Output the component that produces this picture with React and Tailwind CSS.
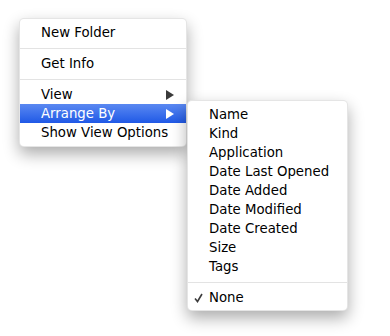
const font = { fontFamily: '"DejaVu Sans", "Liberation Sans", sans-serif' };

function Arrow({ active }) {
  return (
    <svg width="8" height="10" viewBox="0 0 8 10" className="shrink-0">
      <path d="M0 0 L8 5 L0 10 Z" fill={active ? "#ffffff" : "#3a3a3a"} />
    </svg>
  );
}

function Item({ label, arrow, active, check }) {
  return (
    <div
      className={`h-[19px] flex items-center pl-[21px] pr-[12px] relative ${
        active ? "bg-gradient-to-b from-[#5a88f1] to-[#1f58e6] text-white" : "text-black"
      }`}
    >
      {check && (
        <svg width="9" height="10" viewBox="0 0 9 10" className="absolute left-[6px] top-[5px]">
          <path d="M1 5.5 L3.5 8.5 L8 1" fill="none" stroke="#3c3c3c" strokeWidth="1.6" />
        </svg>
      )}
      <span className="flex-1 leading-none">{label}</span>
      {arrow && <Arrow active={active} />}
    </div>
  );
}

function Sep() {
  return (
    <div className="h-[12px] flex items-center">
      <div className="h-px w-full bg-[#e3e3e3]" />
    </div>
  );
}

export default function App() {
  const sortKeys = [
    "Name",
    "Kind",
    "Application",
    "Date Last Opened",
    "Date Added",
    "Date Modified",
    "Date Created",
    "Size",
    "Tags",
  ];

  return (
    <div className="w-[390px] h-[336px] bg-white relative overflow-hidden text-[13.3px]" style={font}>
      {/* main context menu */}
      <div className="absolute left-[19px] top-[18px] w-[168px] py-[4px] bg-white rounded-[5px] border border-black/10 shadow-[0_7px_16px_rgba(0,0,0,0.33)]">
        <Item label="New Folder" />
        <Sep />
        <Item label="Get Info" />
        <Sep />
        <Item label="View" arrow />
        <Item label="Arrange By" arrow active />
        <Item label="Show View Options" />
      </div>

      {/* submenu */}
      <div className="absolute left-[187px] top-[100px] w-[161px] pt-[4px] pb-[3px] bg-white rounded-[5px] border border-black/10 shadow-[0_7px_16px_rgba(0,0,0,0.33)]">
        {sortKeys.map((k) => (
          <Item key={k} label={k} />
        ))}
        <Sep />
        <Item label="None" check />
      </div>
    </div>
  );
}
